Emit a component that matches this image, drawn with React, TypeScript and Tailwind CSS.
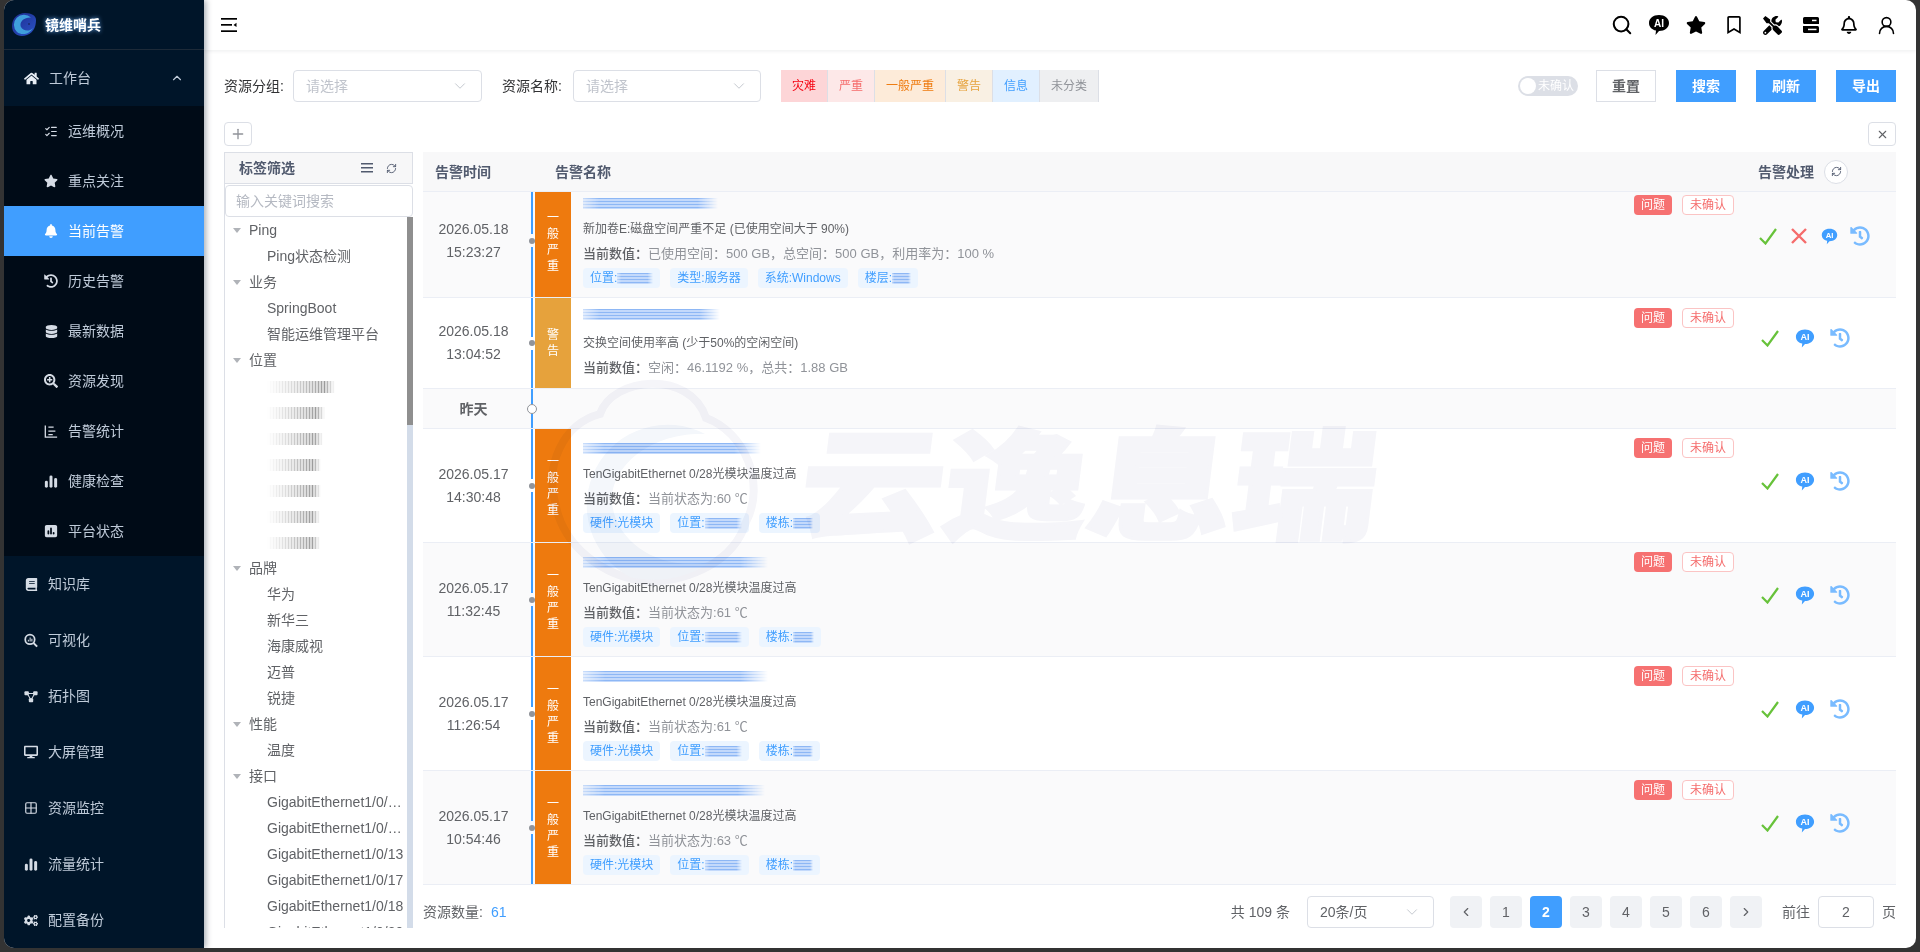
import type { ReactNode } from 'react';
import {
  FaBell, FaBook, FaCogs, FaDatabase, FaDesktop, FaHistory, FaHome, FaRegBell, FaRegBookmark,
  FaSearchPlus, FaStar, FaTools,
} from 'react-icons/fa';
import { FaSquarePollVertical } from 'react-icons/fa6';
import { ChevronDown, ChevronLeft, ChevronRight, ChevronUp, Grid2x2, ListChecks, Plus, RefreshCw, Search, UserRound, X } from 'lucide-react';

const Bars = ({ size = 15 }: { size?: number }) => (
  <svg width={size} height={size} viewBox="0 0 16 16" fill="currentColor">
    <rect x="1" y="7" width="3.4" height="8" rx="1.7" />
    <rect x="6.3" y="1" width="3.4" height="14" rx="1.7" />
    <rect x="11.6" y="4" width="3.4" height="11" rx="1.7" />
  </svg>
);

const AxisChart = () => (
  <svg width="15" height="15" viewBox="0 0 16 16" fill="none" stroke="currentColor" strokeWidth="1.5">
    <path d="M1.5 1v13.5H15M5 3h6M5 7.500h8M5 11.500h5" />
  </svg>
);

const Topology = () => (
  <svg width="15" height="15" viewBox="0 0 16 16" fill="currentColor">
    <rect x="0.5" y="2" width="5" height="4.5" rx="1" />
    <rect x="10.5" y="2" width="5" height="4.5" rx="1" />
    <rect x="5.5" y="10" width="5" height="4.5" rx="1" />
    <path d="M4 4h8v1H4zM3.500 5.500l1-.6 3.500 6-1 .6zM12.500 5.500l-1-.6-3.500 6 1 .6z" />
  </svg>
);

const ChartSearch = () => (
  <svg width="15" height="15" viewBox="0 0 16 16" fill="none" stroke="currentColor">
    <circle cx="6.8" cy="6.8" r="5.4" strokeWidth="2" />
    <path d="M11 11l4 4" strokeWidth="2.4" />
    <path d="M5 9V7M7 9V4.500M9 9V6" strokeWidth="1.2" />
  </svg>
);

const Collapse = () => (
  <svg width="16" height="14" viewBox="0 0 16 14" fill="currentColor">
    <rect width="16" height="1.7" />
    <rect y="6" width="11" height="1.7" />
    <rect y="12.3" width="16" height="1.7" />
    <path d="M12.500 6.900L15.500 4.700v4.400z" />
  </svg>
);

const ServerIcon = () => (
  <svg width="16" height="16" viewBox="0 0 16 16" fill="currentColor">
    <path d="M1.500 0h13A1.500 1.500 0 0116 1.500V7H1.500A1.500 1.500 0 010 5.500v-4A1.500 1.500 0 011.500 0z" />
    <path d="M0 9h14.500A1.500 1.500 0 0116 10.500v4a1.500 1.500 0 01-1.500 1.500h-13A1.500 1.500 0 010 14.500z" />
    <rect x="9" y="2.700" width="4.500" height="1.500" fill="#fff" />
    <rect x="5" y="11.700" width="8.500" height="1.500" fill="#fff" />
  </svg>
);

const AiBubble = ({ size, color }: { size: number; color: string }) => (
  <svg width={size} height={size} viewBox="0 0 22 22">
    <path fill={color} d="M11 1c5.800 0 10 3.500 10 8s-4.200 8-10 8l-3.500 4 .5-4.400C3.800 15.800 1 12.800 1 9c0-4.500 4.200-8 10-8z" />
    <text x="11" y="13" textAnchor="middle" fontSize="10" fontWeight="700" fill="#fff" fontFamily="Liberation Sans">AI</text>
  </svg>
);

const CheckMark = () => (
  <svg width="18" height="17" viewBox="0 0 18 17" fill="none" stroke="#67c23a" strokeWidth="2.2">
    <path d="M1 10l5.500 5.500L17 1" />
  </svg>
);

const Cross = () => (
  <svg width="16" height="16" viewBox="0 0 16 16" fill="none" stroke="#f56c6c" strokeWidth="2.4">
    <path d="M1 1l14 14M15 1L1 15" />
  </svg>
);

const Logo = () => (
  <svg width="26" height="26" viewBox="0 0 26 26">
    <defs>
      <linearGradient id="logoRing" x1="0" y1="0" x2="1" y2="1">
        <stop offset="0" stopColor="#1c2a8c" />
        <stop offset="1" stopColor="#2b54c8" />
      </linearGradient>
    </defs>
    <path fill="url(#logoRing)" d="M14 1c7 0 11 3 11 7s-1 12-9 15c-8 3-15-1-15-9S7 1 14 1z" />
    <path fill="#3f9fdc" d="M20 5.500A10 10 0 006 20c5 4 13 2 16-4-4 4-10 3-12-1-2-4 2-10 10-9.500z" />
    <circle cx="18" cy="12" r="1" fill="#1a2a6c" />
  </svg>
);

const Smudge = ({ w, gray }: { w: number; gray?: boolean }) => (
  <span
    style={{ width: w }}
    className={
      gray
        ? "inline-block h-[12px] align-middle blur-[0.6px] bg-[repeating-linear-gradient(90deg,#9b9b9b_0px,#9b9b9b_1px,#d6d6d6_1px,#d6d6d6_3px)] [mask-image:linear-gradient(90deg,transparent,rgba(0,0,0,0.35)_35%,black_85%,transparent)]"
        : "inline-block h-[11px] blur-[0.7px] bg-[repeating-linear-gradient(180deg,#8db7f5_0px,#8db7f5_1.500px,#c3d9fb_1.500px,#c3d9fb_3px)] [mask-image:linear-gradient(90deg,rgba(0,0,0,0.45),black_12%,black_85%,transparent)]"
    }
  />
);

const subMenu: [ReactNode, string][] = [
  [<ListChecks size={15} />, '运维概况'],
  [<FaStar size={14} />, '重点关注'],
  [<FaBell size={14} />, '当前告警'],
  [<FaHistory size={14} />, '历史告警'],
  [<FaDatabase size={13} />, '最新数据'],
  [<FaSearchPlus size={14} />, '资源发现'],
  [<AxisChart />, '告警统计'],
  [<Bars />, '健康检查'],
  [<FaSquarePollVertical size={14} />, '平台状态'],
];

const mainMenu: [ReactNode, string][] = [
  [<FaBook size={13} />, '知识库'],
  [<ChartSearch />, '可视化'],
  [<Topology />, '拓扑图'],
  [<FaDesktop size={14} />, '大屏管理'],
  [<Grid2x2 size={14} />, '资源监控'],
  [<Bars />, '流量统计'],
  [<FaCogs size={15} />, '配置备份'],
];

const levels = [
  { label: '灾难', w: 'w-[47px]', cls: 'bg-[#fdd5d7] text-[#f5000f]' },
  { label: '严重', w: 'w-[47px]', cls: 'bg-[#fde8e8] text-[#f56c6c]' },
  { label: '一般严重', w: 'w-[71px]', cls: 'bg-[#fdebd9] text-[#ee7a0e]' },
  { label: '警告', w: 'w-[47px]', cls: 'bg-[#f9f0e3] text-[#e6a23c]' },
  { label: '信息', w: 'w-[47px]', cls: 'bg-[#e1f0ff] text-[#409eff]' },
  { label: '未分类', w: 'w-[59px]', cls: 'bg-[#eeeff1] text-[#909399]' },
];

const tree: { label: string; items: (string | number)[] }[] = [
  { label: 'Ping', items: ['Ping状态检测'] },
  { label: '业务', items: ['SpringBoot', '智能运维管理平台'] },
  { label: '位置', items: [68, 58, 56, 54, 54, 53, 53] },
  { label: '品牌', items: ['华为', '新华三', '海康威视', '迈普', '锐捷'] },
  { label: '性能', items: ['温度'] },
  {
    label: '接口',
    items: [
      'GigabitEthernet1/0/10-uplink',
      'GigabitEthernet1/0/11-uplink',
      'GigabitEthernet1/0/13',
      'GigabitEthernet1/0/17',
      'GigabitEthernet1/0/18',
      'GigabitEthernet1/0/20',
    ],
  },
];

type Tag = { text: string; blur?: number };
const moduleTags = (a: number, b: number): Tag[] => [
  { text: '硬件:光模块' },
  { text: '位置:', blur: a },
  { text: '楼栋:', blur: b },
];

type Row = {
  date: string;
  time: string;
  warn?: boolean;
  title: number;
  desc: string;
  value: string;
  tags: Tag[];
  h: string;
  pt: string;
  badgeTop: string;
  iconGap: string;
  lift?: boolean;
  reject?: boolean;
  alt?: boolean;
};

const firstRows: Row[] = [
  {
    date: '2026.05.18', time: '15:23:27', title: 135, alt: true, lift: true, reject: true,
    desc: '新加卷E:磁盘空间严重不足 (已使用空间大于 90%)',
    value: '已使用空间：500 GB，总空间：500 GB，利用率为：100 %',
    tags: [{ text: '位置:', blur: 36 }, { text: '类型:服务器' }, { text: '系统:Windows' }, { text: '楼层:', blur: 19 }],
    h: 'h-[106px]', pt: 'pt-[6px]', badgeTop: 'pt-[3px]', iconGap: 'mt-[11px]',
  },
  {
    date: '2026.05.18', time: '13:04:52', warn: true, title: 137,
    desc: '交换空间使用率高 (少于50%的空闲空间)',
    value: '空闲：46.1192 %，总共：1.88 GB',
    tags: [],
    h: 'h-[91px]', pt: 'pt-[11px]', badgeTop: 'pt-[10px]', iconGap: 'mt-0',
  },
];

const secondRows: Row[] = [
  { date: '2026.05.17', time: '14:30:48', title: 178, desc: 'TenGigabitEthernet 0/28光模块温度过高', value: '当前状态为:60 ℃', tags: moduleTags(37, 20), h: 'h-[114px]', pt: 'pt-[14px]', badgeTop: 'pt-[9px]', iconGap: 'mt-[13px]' },
  { date: '2026.05.17', time: '11:32:45', title: 185, alt: true, desc: 'TenGigabitEthernet 0/28光模块温度过高', value: '当前状态为:61 ℃', tags: moduleTags(37, 21), h: 'h-[114px]', pt: 'pt-[14px]', badgeTop: 'pt-[9px]', iconGap: 'mt-[13px]' },
  { date: '2026.05.17', time: '11:26:54', title: 185, desc: 'TenGigabitEthernet 0/28光模块温度过高', value: '当前状态为:61 ℃', tags: moduleTags(37, 20), h: 'h-[114px]', pt: 'pt-[14px]', badgeTop: 'pt-[9px]', iconGap: 'mt-[13px]' },
  { date: '2026.05.17', time: '10:54:46', title: 182, alt: true, desc: 'TenGigabitEthernet 0/28光模块温度过高', value: '当前状态为:63 ℃', tags: moduleTags(37, 20), h: 'h-[114px]', pt: 'pt-[14px]', badgeTop: 'pt-[9px]', iconGap: 'mt-[13px]' },
];

const History = () => <FaHistory size={20} className="text-[#79bbff]" />;

const AlarmRow = ({ row }: { row: Row }) => (
  <div className={`flex ${row.h} border-b border-[#ebeef5] ${row.alt ? 'bg-[#fafafb]' : 'bg-white'}`}>
    <div className={`w-[101px] flex flex-col justify-center items-center text-sm leading-[23px] text-[#606266] ${row.lift ? 'pb-2' : ''}`}>
      <div>{row.date}</div>
      <div>{row.time}</div>
    </div>
    <div className="w-[3px] ml-[6px] flex flex-col items-center">
      <div className="flex-1 w-[2px] bg-[#409eff]" />
      <div className="h-[13px] flex items-center shrink-0">
        <div className="w-[6px] h-[6px] shrink-0 rounded-full bg-[#909399]" />
      </div>
      <div className={`w-[2px] bg-[#409eff] ${row.lift ? 'h-[50px]' : 'flex-1'}`} />
    </div>
    <div className={`w-9 ml-[2px] flex flex-col items-center justify-center text-xs leading-4 text-white ${row.warn ? 'bg-[#e6a23c]' : 'bg-[#ee7a0e]'} ${row.lift ? 'pb-[6px]' : ''}`}>
      {(row.warn ? '警告' : '一般严重').split('').map((c, i) => (
        <span key={i}>{c}</span>
      ))}
    </div>
    <div className={`flex-1 pl-3 ${row.pt}`}>
      <div className="h-[11px] flex"><Smudge w={row.title} /></div>
      <div className={`${row.warn ? 'mt-[16px]' : 'mt-[13px]'} text-xs leading-[14px] text-[#606266]`}>{row.desc}</div>
      <div className="mt-[10px] text-[13px] leading-4 text-[#909399]">
        <span className="text-[#606266] font-medium">当前数值：</span>
        {row.value}
      </div>
      {row.tags.length > 0 && (
        <div className="mt-[6px] flex gap-[10px]">
          {row.tags.map((t, i) => (
            <span key={i} className="h-5 px-[7px] rounded bg-[#ecf5ff] text-xs text-[#409eff] flex items-center whitespace-nowrap">
              {t.text}
              {t.blur && <Smudge w={t.blur} />}
            </span>
          ))}
        </div>
      )}
    </div>
    <div className={`w-[262px] ${row.badgeTop}`}>
      <div className="flex gap-[10px]">
        <span className="w-[38px] h-5 rounded bg-[#f67171] text-white text-xs flex items-center justify-center">问题</span>
        <span className="w-[52px] h-5 rounded border border-[#fbc4c4] bg-white text-[#f56c6c] text-xs flex items-center justify-center">未确认</span>
      </div>
      {row.reject ? (
        <div className={`${row.iconGap} ml-[124px] flex items-center gap-[10.500px] h-5`}>
          <span className="w-5 flex justify-center"><CheckMark /></span>
          <span className="w-5 flex justify-center"><Cross /></span>
          <span className="w-5 flex justify-center"><AiBubble size={17} color="#409eff" /></span>
          <span className="w-5 flex justify-center"><History /></span>
        </div>
      ) : (
        <div className={`${row.iconGap} ml-[126px] flex items-center gap-[15px] h-5`}>
          <span className="w-5 flex justify-center"><CheckMark /></span>
          <span className="w-5 flex justify-center"><AiBubble size={23} color="#409eff" /></span>
          <span className="w-5 flex justify-center"><History /></span>
        </div>
      )}
    </div>
  </div>
);

const SelectBox = ({ w }: { w: string }) => (
  <div className={`${w} h-8 rounded border border-[#dcdfe6] bg-white px-3 flex items-center justify-between text-sm text-[#c0c4cc]`}>
    <span>请选择</span>
    <ChevronDown size={18} strokeWidth={1.25} className="text-[#c0c4cc]" />
  </div>
);

export default function App() {
  return (
    <div className="w-[1920px] h-[952px] bg-[#333333] px-1 pb-1 overflow-hidden font-['Liberation_Sans','Noto_Sans_CJK_SC',sans-serif]">
      <div className="h-full rounded-[10px] overflow-hidden flex bg-white">
        {/* Sidebar */}
        <aside className="w-[200px] shrink-0 bg-[#001529] text-[#bfcbd9] text-sm z-20 shadow-[2px_0_6px_rgba(0,21,41,0.35)]">
          <div className="h-[50px] border-b border-[#1d2a38] flex items-center pl-[7px] gap-2">
            <Logo />
            <span className="font-bold text-white [text-shadow:0_0_4px_#6fb2ff]">镜维哨兵</span>
          </div>
          <div className="h-14 flex items-center pl-5 pr-[20px] gap-[10px]">
            <FaHome size={15} className="text-[#e6edf5]" />
            <span className="flex-1">工作台</span>
            <ChevronUp size={14} />
          </div>
          <div className="bg-[#000b17]">
            {subMenu.map(([icon, label]) => {
              const active = label === '当前告警';
              return (
                <div key={label} className={`h-[50px] flex items-center pl-10 gap-[10px] ${active ? 'bg-[#409eff] text-white' : ''}`}>
                  <span className={`w-[14px] flex justify-center ${active ? '' : 'text-[#d5dce5]'}`}>{icon}</span>
                  <span>{label}</span>
                </div>
              );
            })}
          </div>
          {mainMenu.map(([icon, label]) => (
            <div key={label} className="h-14 flex items-center pl-5 gap-[10px]">
              <span className="w-[14px] flex justify-center text-[#d5dce5]">{icon}</span>
              <span>{label}</span>
            </div>
          ))}
        </aside>

        {/* Main */}
        <main className="flex-1 min-w-0 flex flex-col">
          <header className="h-[50px] shrink-0 flex items-center justify-between pl-[17px] pr-[11px] shadow-[0_1px_4px_rgba(0,21,41,0.08)] text-black">
            <Collapse />
            <div className="flex items-center">
              <span className="w-[37px] flex justify-center"><Search size={22} strokeWidth={2.2} /></span>
              <span className="w-[37px] flex justify-center"><AiBubble size={22} color="#000" /></span>
              <span className="w-[38px] flex justify-center"><FaStar size={20} /></span>
              <span className="w-[38px] flex justify-center"><FaRegBookmark size={18} /></span>
              <span className="w-[39px] flex justify-center"><FaTools size={19} /></span>
              <span className="w-[38px] flex justify-center"><ServerIcon /></span>
              <span className="w-[38px] flex justify-center"><FaRegBell size={18} /></span>
              <span className="w-[37px] flex justify-center"><UserRound size={21} strokeWidth={1.8} /></span>
            </div>
          </header>

          <div className="flex-1 min-h-0 px-5 pt-5 flex flex-col">
            {/* Filters */}
            <div className="h-8 flex items-center text-sm text-[#303133]">
              <span className="w-[69px]">资源分组:</span>
              <SelectBox w="w-[189px]" />
              <span className="w-[71px] ml-[20px]">资源名称:</span>
              <SelectBox w="w-[188px]" />
              <div className="ml-5 flex">
                {levels.map(l => (
                  <div key={l.label} className={`${l.w} h-8 flex items-center justify-center text-xs border-r border-[#dcdfe6] ${l.cls}`}>
                    {l.label}
                  </div>
                ))}
              </div>
              <div className="ml-auto w-[60px] h-5 rounded-full bg-[#dcdfe6] flex items-center pl-[2px] text-xs text-white">
                <span className="w-4 h-4 rounded-full bg-white shrink-0" />
                <span className="ml-[2px] whitespace-nowrap">未确认</span>
              </div>
              <button className="ml-[18px] w-[60px] h-8 border border-[#dcdfe6] text-[#606266] font-bold">重置</button>
              <button className="ml-5 w-[60px] h-8 bg-[#409eff] text-white font-bold">搜索</button>
              <button className="ml-5 w-[60px] h-8 bg-[#409eff] text-white font-bold">刷新</button>
              <button className="ml-5 w-[60px] h-8 bg-[#409eff] text-white font-bold">导出</button>
            </div>

            <div className="mt-5 h-6 flex justify-between">
              <button className="w-7 h-6 rounded border border-[#dcdfe6] flex items-center justify-center text-[#909399]"><Plus size={16} /></button>
              <button className="w-7 h-6 rounded border border-[#dcdfe6] flex items-center justify-center text-[#606266]"><X size={13} /></button>
            </div>

            <div className="mt-[6px] flex-1 min-h-0 flex gap-[10px]">
              {/* Tag filter panel */}
              <div className="w-[189px] shrink-0 h-[776px] border-l border-[#dcdfe6] flex flex-col">
                <div className="h-8 shrink-0 bg-[#f7f7f8] border-b border-r border-t border-[#dcdfe6] flex items-center pl-[14px] pr-[15px] text-[#515a6e]">
                  <span className="flex-1 text-sm font-bold">标签筛选</span>
                  <svg width="12" height="10" viewBox="0 0 12 10" fill="currentColor"><rect width="12" height="1.500" /><rect y="4" width="12" height="1.500" /><rect y="8" width="12" height="1.500" /></svg>
                  <RefreshCw size={11} className="ml-[13px]" />
                </div>
                <div className="h-8 shrink-0 rounded border border-[#dcdfe6] mt-[1px] px-[10px] flex items-center text-sm text-[#b5b9c2]">输入关键词搜索</div>
                <div className="flex-1 min-h-0 flex">
                  <div className="flex-1 min-w-0 overflow-hidden text-sm text-[#606266] pr-[3px]">
                    {tree.map(group => (
                      <div key={group.label}>
                        <div className="h-[26px] flex items-center pl-[8px]">
                          <span className="w-0 h-0 border-x-[4px] border-x-transparent border-t-[5px] border-t-[#b0b3b8] mr-[8px]" />
                          {group.label}
                        </div>
                        {group.items.map((item, i) => (
                          <div key={i} className="h-[26px] leading-[26px] pl-[42px] truncate">
                            {typeof item === 'number' ? <Smudge w={item} gray /> : item}
                          </div>
                        ))}
                      </div>
                    ))}
                  </div>
                  <div className="w-[6px] shrink-0 bg-[#d3dce9]">
                    <div className="h-[208px] bg-[#8f8f8f]" />
                  </div>
                </div>
              </div>

              {/* Alarm table */}
              <div className="flex-1 min-w-0 flex flex-col">
                <div className="relative">
                  <div className="h-[40px] bg-[#f8f8f9] border-b border-[#ebeef5] flex items-center text-sm font-bold text-[#515a6e]">
                    <span className="w-[132px] pl-3">告警时间</span>
                    <span className="flex-1">告警名称</span>
                    <span className="w-[66px]">告警处理</span>
                    <span className="w-6 h-6 mr-[48px] rounded-full border border-[#dcdfe6] bg-white flex items-center justify-center font-normal">
                      <RefreshCw size={11} />
                    </span>
                  </div>
                  {firstRows.map(r => <AlarmRow key={r.time} row={r} />)}
                  <div className="h-10 flex bg-[#fafafb] border-b border-[#ebeef5]">
                    <div className="w-[101px] flex items-center justify-center text-sm font-bold text-[#606266]">昨天</div>
                    <div className="w-[3px] ml-[6px] flex flex-col items-center">
                      <div className="flex-1 w-[2px] bg-[#409eff]" />
                      <div className="w-[10px] h-[10px] shrink-0 rounded-full border border-[#909399] bg-white" />
                      <div className="flex-1 w-[2px] bg-[#409eff]" />
                    </div>
                  </div>
                  {secondRows.map(r => <AlarmRow key={r.time} row={r} />)}

                  {/* watermark over the table */}
                  <div className="absolute left-[117px] top-[220px] pointer-events-none mix-blend-multiply">
                    <svg width="220" height="215" viewBox="0 0 220 215" fill="none">
                      <path stroke="#f5f5f9" strokeWidth="8" d="M60 42C72 5 150 -3 166 46C205 60 226 112 206 150C194 190 150 208 110 210C60 205 22 172 15 130C5 95 22 52 60 42z" />
                      <path fill="#f4f7fb" d="M165 62A80 80 0 0090 205C120 212 150 205 170 190C120 200 75 170 72 130C70 95 110 60 165 62z" />
                    </svg>
                  </div>
                  <div className="absolute left-[387px] top-[266px] pointer-events-none mix-blend-multiply whitespace-nowrap origin-top-left scale-x-[1.2] -skew-x-6 font-black text-[120px] leading-none text-[#f5f5f9] [-webkit-text-stroke:3px_#f5f5f9] font-['Noto_Sans_CJK_SC',sans-serif]">
                    云逸息瑞
                  </div>
                </div>

                {/* Footer */}
                <div className="mt-[11px] h-8 flex items-center text-sm text-[#606266]">
                  <span>资源数量:</span>
                  <span className="ml-2 text-[#409eff]">61</span>
                  <span className="ml-auto">共 109 条</span>
                  <div className="ml-[17px] w-[127px] h-8 rounded border border-[#dcdfe6] px-3 flex items-center justify-between">
                    <span>20条/页</span>
                    <ChevronDown size={18} strokeWidth={1.25} className="text-[#c0c4cc]" />
                  </div>
                  <div className="ml-4 flex gap-2">
                    <span className="w-8 h-8 rounded-sm bg-[#f0f2f5] flex items-center justify-center"><ChevronLeft size={14} /></span>
                    {[1, 2, 3, 4, 5, 6].map(n => (
                      <span key={n} className={`w-8 h-8 rounded-sm flex items-center justify-center ${n === 2 ? 'bg-[#409eff] text-white font-bold' : 'bg-[#f0f2f5]'}`}>{n}</span>
                    ))}
                    <span className="w-8 h-8 rounded-sm bg-[#f0f2f5] flex items-center justify-center"><ChevronRight size={14} /></span>
                  </div>
                  <span className="ml-[20px]">前往</span>
                  <div className="ml-2 w-14 h-8 rounded border border-[#dcdfe6] flex items-center justify-center">2</div>
                  <span className="ml-2">页</span>
                </div>
              </div>
            </div>
          </div>
        </main>
      </div>
    </div>
  );
}
